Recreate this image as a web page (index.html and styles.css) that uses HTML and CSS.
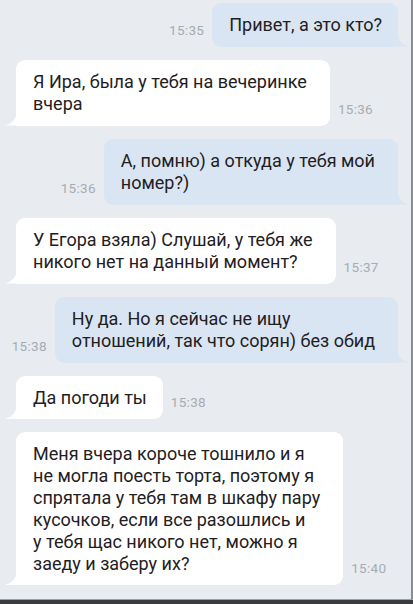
FILE: index.html
```html
<!DOCTYPE html>
<html lang="ru">
<head>
    <meta charset="UTF-8">
    <meta name="viewport" content="width=device-width, initial-scale=1.0">
    <title>Сообщения</title>
    <link rel="stylesheet" href="styles.css">
</head>
<body>

<!-- Chat -->
<div class="chat">
    <div class="row out">
        <span class="time">15:35</span>
        <div class="bubble">Привет, а это кто?</div>
    </div>

    <div class="row in">
        <div class="bubble multi">Я Ира, была у тебя на вечеринке<br>вчера</div>
        <span class="time">15:36</span>
    </div>

    <div class="row out">
        <span class="time">15:36</span>
        <div class="bubble multi">А, помню) а откуда у тебя мой<br>номер?)</div>
    </div>

    <div class="row in">
        <div class="bubble multi">У Егора взяла) Слушай, у тебя же<br>никого нет на данный момент?</div>
        <span class="time">15:37</span>
    </div>

    <div class="row out">
        <span class="time">15:38</span>
        <div class="bubble multi">Ну да. Но я сейчас не ищу<br>отношений, так что сорян) без обид</div>
    </div>

    <div class="row in">
        <div class="bubble">Да погоди ты</div>
        <span class="time">15:38</span>
    </div>

    <div class="row in">
        <div class="bubble multi long">Меня вчера короче тошнило и я<br>не могла поесть торта, поэтому я<br>спрятала у тебя там в шкафу пару<br>кусочков, если все разошлись и<br>у тебя щас никого нет, можно я<br>заеду и заберу их?</div>
        <span class="time">15:40</span>
    </div>
</div>

<div class="bottom-strip"></div>

</body>
</html>
```

FILE: styles.css
```css
body {
    font-family: Roboto, "Noto Sans", sans-serif;
    margin: 0;
    padding: 0;
    color: #1f2022;
    background-color: #e8ebf0;
    overflow: hidden;
}

.chat {
    display: flex;
    flex-direction: column;
    gap: 13px;
    width: 382px;
    height: 596px;
    padding: 3px 13px 0 16px;
    border-right: 2px solid #8a8e94;
    background-color: #e8ebf0;
}

.row {
    display: flex;
    align-items: flex-end;
    gap: 8px;
}

.row.out {
    justify-content: flex-end;
}

.row.in {
    justify-content: flex-start;
}

.time {
    font-size: 13.5px;
    letter-spacing: 0.3px;
    color: #a6abb3;
    margin-bottom: 9px;
    white-space: nowrap;
}

.bubble {
    position: relative;
    font-size: 18px;
    line-height: 22.5px;
    padding: 11px 16px 10px 17px;
    border-radius: 9px;
    white-space: nowrap;
}

.bubble.multi {
    padding-right: 23px;
}

.bubble.long {
    line-height: 22px;
}

.out .bubble {
    background-color: #dae5f4;
    border-bottom-right-radius: 0;
}

.in .bubble {
    background-color: #ffffff;
    border-bottom-left-radius: 0;
}

/* tails */
.bubble::after {
    content: "";
    position: absolute;
    bottom: 0;
    width: 12px;
    height: 14px;
    background-color: inherit;
}

.out .bubble::after {
    right: -11px;
    clip-path: path('M0 0 Q1 11 12 14 L0 14 Z');
}

.in .bubble::after {
    left: -11px;
    clip-path: path('M12 0 Q11 11 0 14 L12 14 Z');
}

.bottom-strip {
    height: 5px;
    background: linear-gradient(#9aa0a8 0, #9aa0a8 1px, #3a3b3f 1px);
}
```
